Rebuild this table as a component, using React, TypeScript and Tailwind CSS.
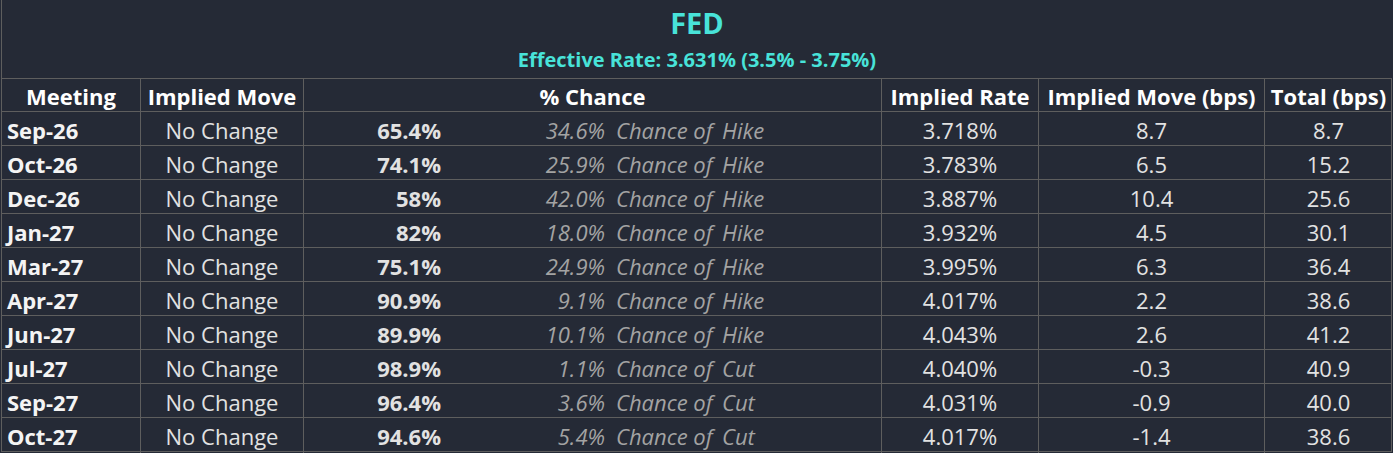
const rows = [
  { m: 'Sep-26', p: '65.4%', o: '34.6%', k: 'Hike', r: '3.718%', mv: '8.7', t: '8.7' },
  { m: 'Oct-26', p: '74.1%', o: '25.9%', k: 'Hike', r: '3.783%', mv: '6.5', t: '15.2' },
  { m: 'Dec-26', p: '58%', o: '42.0%', k: 'Hike', r: '3.887%', mv: '10.4', t: '25.6' },
  { m: 'Jan-27', p: '82%', o: '18.0%', k: 'Hike', r: '3.932%', mv: '4.5', t: '30.1' },
  { m: 'Mar-27', p: '75.1%', o: '24.9%', k: 'Hike', r: '3.995%', mv: '6.3', t: '36.4' },
  { m: 'Apr-27', p: '90.9%', o: '9.1%', k: 'Hike', r: '4.017%', mv: '2.2', t: '38.6' },
  { m: 'Jun-27', p: '89.9%', o: '10.1%', k: 'Hike', r: '4.043%', mv: '2.6', t: '41.2' },
  { m: 'Jul-27', p: '98.9%', o: '1.1%', k: 'Cut', r: '4.040%', mv: '-0.3', t: '40.9' },
  { m: 'Sep-27', p: '96.4%', o: '3.6%', k: 'Cut', r: '4.031%', mv: '-0.9', t: '40.0' },
  { m: 'Oct-27', p: '94.6%', o: '5.4%', k: 'Cut', r: '4.017%', mv: '-1.4', t: '38.6' },
];

const grid = 'grid grid-cols-[139px_163px_578px_157px_226px_127px]';
const cell = 'border-r border-[#5e5e5e]';

export default function App() {
  return (
    <div className="w-[1393px] h-[453px] bg-[#252a36] font-['Open_Sans',sans-serif] text-[22px]">
      <div className="ml-px w-[1391px] border-l border-[#5e5e5e]">
        {/* Title */}
        <div className="h-[78px] flex flex-col items-center text-[#48e3d9]">
          <div className="text-[29px] font-bold leading-none pt-[8px]">FED</div>
          <div className="text-[20px] font-bold leading-none mt-[13px]">
            Effective Rate: 3.631% (3.5% - 3.75%)
          </div>
        </div>

        <div className="border-t border-r border-[#5e5e5e]">
          {/* Header */}
          <div className={`${grid} h-[33px] border-b border-[#5e5e5e] font-bold text-white leading-[32px] text-center`}>
            <div className={`${cell} pt-px`}>Meeting</div>
            <div className={`${cell} pt-px`}>Implied Move</div>
            <div className={`${cell} pt-px`}>% Chance</div>
            <div className={`${cell} pt-px`}>Implied Rate</div>
            <div className={`${cell} pt-px`}>Implied Move (bps)</div>
            <div className="pt-px">Total (bps)</div>
          </div>

          {rows.map((r) => (
            <div key={r.m} className={`${grid} h-[34px] border-b border-[#5e5e5e] leading-[33px] text-[#e2e2e2]`}>
              <div className={`${cell} pl-[5px] pt-[2px] font-bold text-[#f4f4f4]`}>{r.m}</div>
              <div className={`${cell} pt-[2px] text-center`}>No Change</div>
              <div className={`${cell} pt-[2px] flex`}>
                <div className="w-[141px] pr-[4px] text-right font-bold">{r.p}</div>
                <div className="w-[164px] pr-[4px] text-right italic text-[#a3a3a3]">{r.o}</div>
                <div className="w-[113px] pl-[7px] italic text-[#a3a3a3]">Chance of</div>
                <div className="italic text-[#a3a3a3]">{r.k}</div>
              </div>
              <div className={`${cell} pt-[2px] text-center`}>{r.r}</div>
              <div className={`${cell} pt-[2px] text-center`}>{r.mv}</div>
              <div className="pt-[2px] text-center">{r.t}</div>
            </div>
          ))}
        </div>
      </div>
    </div>
  );
}
